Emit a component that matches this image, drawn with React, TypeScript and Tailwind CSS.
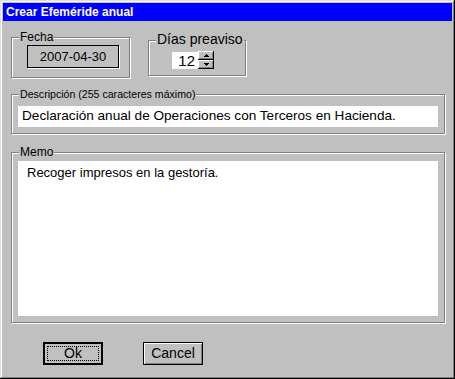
import React from 'react';

const groove = 'relative border border-[#808080] shadow-[1px_1px_0_#fff,inset_1px_1px_0_#fff]';

const Legend: React.FC<{ text: string; className?: string }> = ({ text, className = '' }) => (
  <span className={`absolute left-[7px] bg-[#c0c0c0] px-[1px] text-black whitespace-nowrap ${className}`}>{text}</span>
);

const SpinButton: React.FC<{ up?: boolean }> = ({ up }) => (
  <div className="flex h-[9px] w-[16px] items-center justify-center bg-[#c0c0c0] shadow-[inset_-1px_-1px_#000,inset_1px_1px_#fff,inset_-2px_-2px_#808080]">
    <svg width="5" height="3" viewBox="0 0 5 3" className="mb-[1px]">
      {up ? <path d="M2 0h1v1h1v1h1v1H0V2h1V1h1z" fill="#000" /> : <path d="M0 0h5v1H4v1H3v1H2V2H1V1H0z" fill="#000" />}
    </svg>
  </div>
);

export default function App() {
  return (
    <div className="h-[379px] w-[455px] bg-[#c0c0c0] p-[3px] font-['Liberation_Sans',Arial,sans-serif] text-black shadow-[inset_-1px_-1px_#000,inset_1px_1px_#dfdfdf,inset_-2px_-2px_#808080,inset_2px_2px_#fff]">
      <div className="h-[18px] bg-[#0000ff] pl-[3px] text-[12px] font-bold leading-[18px] text-white">Crear Efeméride anual</div>

      <div className="pl-[8px]">
        {/* top row */}
        <div className="mt-[16px] flex items-start">
          <div className={`${groove} h-[41px] w-[119px]`}>
            <Legend text="Fecha" className="top-[-8px] text-[12px] leading-[14px]" />
            <div className="ml-[15px] mt-[7px] flex h-[23px] w-[92px] items-center justify-center border border-black text-[13px] shadow-[1px_1px_0_#fff]">
              2007-04-30
            </div>
          </div>

          <div className={`${groove} ml-[18px] mt-[3px] h-[36px] w-[98px]`}>
            <Legend text="Días preaviso" className="top-[-10px] text-[14px] leading-[17px]" />
            <div className="ml-[23px] mt-[10px] flex items-center">
              <div className="flex h-[17px] w-[26px] items-center justify-end bg-white pr-[3px] text-[15px] leading-[17px]">12</div>
              <div className="flex flex-col">
                <SpinButton up />
                <SpinButton />
              </div>
            </div>
          </div>
        </div>

        {/* description */}
        <div className={`${groove} mt-[16px] h-[40px] w-[434px]`}>
          <Legend text="Descripción (255 caracteres máximo)" className="top-[-7px] text-[10.6px] leading-[12px]" />
          <div className="ml-[6px] mt-[11px] flex h-[21px] w-[420px] items-center bg-white pl-[4px] text-[13.6px]">
            Declaración anual de Operaciones con Terceros en Hacienda.
          </div>
        </div>

        {/* memo */}
        <div className={`${groove} mt-[18px] h-[171px] w-[434px]`}>
          <Legend text="Memo" className="top-[-7px] text-[12px] leading-[12px]" />
          <div className="ml-[6px] mt-[8px] h-[155px] w-[420px] bg-white pl-[9px] pt-[4px] text-[13px] leading-[16px]">
            Recoger impresos en la gestoría.
          </div>
        </div>

        {/* buttons */}
        <div className="mt-[19px] flex">
          <div className="ml-[32px] flex h-[23px] w-[60px] items-center justify-center border-2 border-black">
            <div className="flex h-[15px] w-[52px] items-center justify-center border border-dotted border-black text-[14px]">Ok</div>
          </div>
          <div className="ml-[40px] flex h-[23px] w-[60px] items-center justify-center border border-black text-[14px] shadow-[inset_1px_1px_#fff,inset_-1px_-1px_#808080]">
            Cancel
          </div>
        </div>
      </div>
    </div>
  );
}
